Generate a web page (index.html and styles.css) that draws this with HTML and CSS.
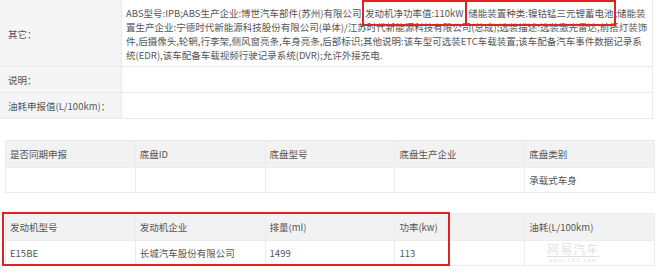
FILE: index.html
```html
<!DOCTYPE html>
<html lang="zh-CN">
<head>
<meta charset="utf-8">
<link rel="stylesheet" href="styles.css">
</head>
<body>
<div class="page">
  <table class="info">
    <tr class="row-other">
      <th>其它：</th>
      <td>ABS型号:IPB;ABS生产企业:博世汽车部件(苏州)有限公司;<span class="mark">发动机净功率值:110kW</span>;<span class="mark">储能装置种类:镍钴锰三元锂蓄电池</span>;储能装<br>置生产企业:宁德时代新能源科技股份有限公司(单体)/江苏时代新能源科技有限公司(总成);选装描述:选装激光雷达,前搭灯装饰<br>件,后摄像头,轮辋,行李架,侧风窗亮条,车身亮条,后部标识;其他说明:该车型可选装ETC车载装置;该车配备汽车事件数据记录系<br>统(EDR),该车配备车载视频行驶记录系统(DVR);允许外接充电.</td>
    </tr>
    <tr class="row-small">
      <th>说明：</th>
      <td></td>
    </tr>
    <tr class="row-small">
      <th>油耗申报值(L/100km)：</th>
      <td></td>
    </tr>
  </table>

  <table class="grid chassis">
    <tr class="head">
      <td>是否同期申报</td>
      <td>底盘ID</td>
      <td>底盘型号</td>
      <td>底盘生产企业</td>
      <td>底盘类别</td>
    </tr>
    <tr>
      <td></td>
      <td></td>
      <td></td>
      <td></td>
      <td>承载式车身</td>
    </tr>
  </table>

  <div class="engine-wrap">
    <table class="grid engine">
      <tr class="head">
        <td>发动机型号</td>
        <td>发动机企业</td>
        <td>排量(ml)</td>
        <td>功率(kw)</td>
        <td>油耗(L/100km)</td>
      </tr>
      <tr>
        <td>E15BE</td>
        <td>长城汽车股份有限公司</td>
        <td>1499</td>
        <td>113</td>
        <td><div class="watermark"><span class="wm-title">网易汽车</span><span class="wm-sub">auto.163.com</span></div></td>
      </tr>
    </table>
    <div class="redbox"></div>
  </div>
</div>
</body>
</html>
```

FILE: styles.css
```css
html, body {
  margin: 0;
  padding: 0;
  background: #ffffff;
}

body {
  font-family: "Noto Sans CJK SC", "Microsoft YaHei", "Liberation Sans", sans-serif;
  font-size: 9.5px;
  color: #555555;
}

.page {
  width: 660px;
  height: 274px;
  overflow: hidden;
}

table {
  border-collapse: collapse;
  table-layout: fixed;
}

.info {
  width: 653px;
  margin-top: -1px;
}

.info th,
.info td {
  border: 1px solid #e9e9e9;
  font-weight: normal;
  text-align: left;
  vertical-align: middle;
}

.info th {
  width: 113px;
  background: #f5f5f5;
  padding: 0 0 0 8px;
  border-left: none;
}

.info td {
  padding: 0 0 0 4px;
  white-space: nowrap;
  line-height: 14px;
}

.row-other td,
.row-other th {
  height: 58px;
  padding-top: 5px;
  padding-bottom: 3px;
}

.row-small th,
.row-small td {
  height: 25px;
  padding-top: 0;
  padding-bottom: 0;
}

.mark {
  outline: 2px solid #e3211f;
  padding: 4px 1px;
}

.grid {
  width: 650px;
  margin-left: 5px;
}

.grid td {
  border: 1px solid #ececec;
  padding: 0 0 0 4px;
  height: 24px;
  white-space: nowrap;
  vertical-align: middle;
}

.grid .head td {
  background: #f2f2f2;
  height: 26px;
}

.chassis {
  margin-top: 21px;
}

.engine-wrap {
  position: relative;
  margin-top: 20px;
}

.redbox {
  position: absolute;
  left: 2px;
  top: -1px;
  width: 444px;
  height: 50px;
  border: 2px solid #e3211f;
  pointer-events: none;
}

.watermark {
  display: inline-flex;
  flex-direction: column;
  align-items: center;
  margin-left: 18px;
  vertical-align: middle;
  color: #d6d6d6;
  line-height: 1;
}

.wm-title {
  font-family: "Noto Sans CJK SC", sans-serif;
  font-weight: 300;
  font-size: 12px;
  letter-spacing: 1px;
  padding-bottom: 1px;
  border-bottom: 1px solid #dedede;
}

.wm-sub {
  font-family: "Liberation Sans", sans-serif;
  font-size: 5px;
  letter-spacing: 1.5px;
  margin-top: 1px;
  color: #dadada;
}
```
